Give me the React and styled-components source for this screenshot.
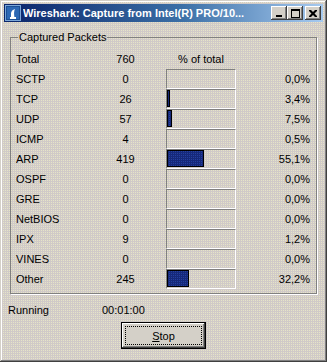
import React from 'react';
import styled, { createGlobalStyle } from 'styled-components';

const GlobalStyle = createGlobalStyle`
    html, body {
        margin: 0;
        padding: 0;
        background: #d4d0c8;
    }
    body {
        font-family: "Liberation Sans", Arial, sans-serif;
        font-size: 11px;
        color: #000;
    }
`;

// classic win2k face with a dithered look
const Window = styled.div`
    width: 327px;
    height: 362px;
    box-sizing: border-box;
    padding: 4px;
    background-color: #d0cac8;
    background-image: conic-gradient(#e6e4c8 25%, transparent 0);
    background-size: 2px 2px;
    box-shadow: inset -1px -1px 0 #404040, inset 1px 1px 0 #d4d0c8,
        inset -2px -2px 0 #808080, inset 2px 2px 0 #fff;
    display: flex;
    flex-direction: column;
`;

const TitleBar = styled.div`
    height: 18px;
    display: flex;
    align-items: center;
    padding: 0 2px 0 1px;
    background: linear-gradient(to right, #0a246a 0%, #3a6ea5 55%, #a6caf0 100%);
`;

const TitleText = styled.span`
    flex: 1;
    margin-left: 2px;
    color: #fff;
    font-weight: bold;
    font-size: 11px;
    white-space: nowrap;
    overflow: hidden;
`;

const TitleButtons = styled.div`
    display: flex;
    gap: 0;
`;

const TitleButton = styled.div`
    width: 16px;
    height: 14px;
    margin-left: ${p => (p.$gap ? '2px' : '0')};
    box-sizing: border-box;
    background: #d4d0c8;
    box-shadow: inset -1px -1px 0 #404040, inset 1px 1px 0 #fff,
        inset -2px -2px 0 #808080;
    display: flex;
    align-items: center;
    justify-content: center;
`;

const Body = styled.div`
    flex: 1;
    display: flex;
    flex-direction: column;
    padding: 9px 4px 0 4px;
`;

const Group = styled.fieldset`
    margin: 0 2px;
    padding: 5px 6px 4px 5px;
    border: 1px solid #808080;
    box-shadow: 1px 1px 0 #fff;
    min-width: 0;
`;

const Legend = styled.legend`
    padding: 0 1px;
    margin-left: 2px;
    line-height: 13px;
`;

const Table = styled.div`
    display: grid;
    grid-template-columns: 84px 51px 85px 1fr;
    grid-auto-rows: 20px;
    align-items: center;
`;

const Name = styled.span`
    padding-left: 0;
`;

const Count = styled.span`
    text-align: center;
`;

const Heading = styled.span`
    justify-self: end;
    width: 70px;
    text-align: center;
`;

const BarBox = styled.div`
    justify-self: end;
    align-self: stretch;
    width: 70px;
    box-sizing: border-box;
    border-top: 1px solid #808080;
    border-left: 1px solid #808080;
    border-bottom: 1px solid #fff;
    border-right: 1px solid #fff;
`;

const Bar = styled.div`
    height: 17px;
    box-sizing: border-box;
    border: 1px solid #000;
    background-color: #16297a;
    background-image: conic-gradient(#2440a0 25%, transparent 0);
    background-size: 2px 2px;
`;

const Percent = styled.span`
    text-align: right;
`;

const StatusRow = styled.div`
    display: grid;
    grid-template-columns: 94px auto;
    height: 19px;
    align-items: center;
    margin-top: 6px;
`;

const ButtonRow = styled.div`
    display: flex;
    justify-content: center;
    margin-top: 3px;
`;

const PushButton = styled.button`
    width: 85px;
    height: 27px;
    padding: 3px;
    box-sizing: border-box;
    border: 1px solid #000;
    background: #d4d0c8;
    box-shadow: inset -1px -1px 0 #404040, inset 1px 1px 0 #fff,
        inset -2px -2px 0 #808080;
    font-family: inherit;
    font-size: 11px;
    color: #000;
    display: flex;
`;

const FocusRing = styled.span`
    flex: 1;
    border: 1px dotted #000;
    display: flex;
    align-items: center;
    justify-content: center;
    u {
        text-decoration: underline;
    }
`;

const packets = [
    { name: 'SCTP', count: 0, pct: 0.0 },
    { name: 'TCP', count: 26, pct: 3.4 },
    { name: 'UDP', count: 57, pct: 7.5 },
    { name: 'ICMP', count: 4, pct: 0.5 },
    { name: 'ARP', count: 419, pct: 55.1 },
    { name: 'OSPF', count: 0, pct: 0.0 },
    { name: 'GRE', count: 0, pct: 0.0 },
    { name: 'NetBIOS', count: 0, pct: 0.0 },
    { name: 'IPX', count: 9, pct: 1.2 },
    { name: 'VINES', count: 0, pct: 0.0 },
    { name: 'Other', count: 245, pct: 32.2 },
];

const fmt = pct => pct.toFixed(1).replace('.', ',') + '%';

const SharkIcon = () => (
    <svg width="16" height="16" viewBox="0 0 16 16">
        <rect x="0.5" y="0.5" width="15" height="15" fill="#1c4f94" stroke="#7aa6d8" />
        <rect x="2" y="2" width="12" height="12" fill="#2d68b4" />
        <path d="M6 13 L6 8 Q6.5 5 10 4 Q8.5 6.5 9.5 13 Z" fill="#fff" />
        <rect x="5" y="12" width="6" height="2" fill="#fff" />
    </svg>
);

const MinGlyph = () => (
    <svg width="8" height="7" viewBox="0 0 8 7">
        <rect x="1" y="5" width="6" height="2" fill="#000" />
    </svg>
);

const MaxGlyph = () => (
    <svg width="9" height="9" viewBox="0 0 9 9">
        <rect x="0.5" y="0.5" width="8" height="8" fill="none" stroke="#000" />
        <rect x="0" y="1" width="9" height="1" fill="#000" />
    </svg>
);

const CloseGlyph = () => (
    <svg width="8" height="7" viewBox="0 0 8 7">
        <path d="M0 0h2l2 2 2-2h2v1l-2.5 2.5L8 6v1H6L4 5 2 7H0V6l2.5-2.5L0 1z" fill="#000" />
    </svg>
);

export default () => {
    return (
        <>
            <GlobalStyle />
            <Window>
                <TitleBar>
                    <SharkIcon />
                    <TitleText>Wireshark: Capture from Intel(R) PRO/10...</TitleText>
                    <TitleButtons>
                        <TitleButton><MinGlyph /></TitleButton>
                        <TitleButton><MaxGlyph /></TitleButton>
                        <TitleButton $gap><CloseGlyph /></TitleButton>
                    </TitleButtons>
                </TitleBar>

                <Body>
                    <Group>
                        <Legend>Captured Packets</Legend>
                        <Table>
                            <Name>Total</Name>
                            <Count>760</Count>
                            <Heading>% of total</Heading>
                            <span />
                            {packets.map(p => {
                                const w = Math.round(p.pct * 0.68);
                                return (
                                    <React.Fragment key={p.name}>
                                        <Name>{p.name}</Name>
                                        <Count>{p.count}</Count>
                                        <BarBox>
                                            {p.pct >= 2 && <Bar style={{ width: Math.max(3, w) }} />}
                                        </BarBox>
                                        <Percent>{fmt(p.pct)}</Percent>
                                    </React.Fragment>
                                );
                            })}
                        </Table>
                    </Group>

                    <StatusRow>
                        <span>Running</span>
                        <span>00:01:00</span>
                    </StatusRow>

                    <ButtonRow>
                        <PushButton>
                            <FocusRing><span><u>S</u>top</span></FocusRing>
                        </PushButton>
                    </ButtonRow>
                </Body>
            </Window>
        </>
    );
};
